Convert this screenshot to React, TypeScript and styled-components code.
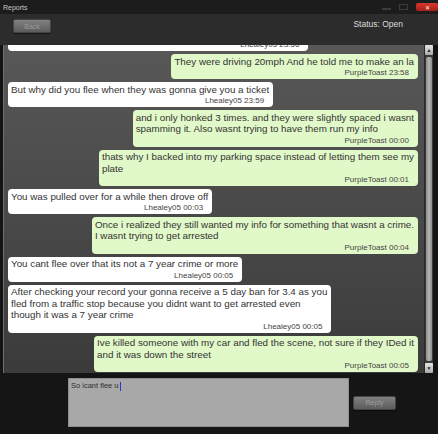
import styled, { createGlobalStyle } from 'styled-components';

const GlobalStyle = createGlobalStyle`
  html, body {
    margin: 0;
    padding: 0;
    background: #121212;
  }
  * {
    box-sizing: border-box;
  }
`;

const Window = styled.div`
  width: 438px;
  height: 434px;
  display: flex;
  flex-direction: column;
  background: #141414;
  font-family: 'Liberation Sans', Arial, sans-serif;
  overflow: hidden;
`;

const TitleBar = styled.div`
  height: 14px;
  display: flex;
  align-items: center;
  justify-content: space-between;
  padding-left: 3px;
  background: #1c1c1c;
`;

const Title = styled.span`
  font-size: 7px;
  color: #c8c8c8;
`;

const Controls = styled.div`
  display: flex;
  align-items: center;
  gap: 8px;
  height: 100%;
`;

const WinButton = styled.div<{ $kind: 'min' | 'max' | 'close' }>`
  width: ${(p) => (p.$kind === 'close' ? '22px' : '9px')};
  height: ${(p) => (p.$kind === 'close' ? '8px' : '6px')};
  display: flex;
  align-items: center;
  justify-content: center;
  font-size: 6px;
  color: #fff;
  background: ${(p) =>
    p.$kind === 'close' ? 'linear-gradient(#d8362c, #a8201a)' : 'transparent'};
  border: ${(p) => (p.$kind === 'max' ? '1px solid #3c3c3c' : 'none')};
  border-bottom: ${(p) =>
    p.$kind === 'min' ? '2px solid #3c3c3c' : p.$kind === 'max' ? '1px solid #3c3c3c' : 'none'};
  border-radius: ${(p) => (p.$kind === 'close' ? '2px' : '0')};
`;

const Header = styled.div`
  height: 31px;
  display: flex;
  justify-content: space-between;
  align-items: flex-start;
  padding: 5px 35px 0 13px;
  background: #2c2c2c;
`;

const Button = styled.div<{ $w: number }>`
  width: ${(p) => p.$w}px;
  height: 14px;
  display: flex;
  align-items: center;
  justify-content: center;
  font-size: 7px;
  color: #9c9c9c;
  background: linear-gradient(#808080, #5c5c5c);
  border: 1px solid #454545;
  border-radius: 2px;
  box-shadow: 0 1px 1px rgba(0, 0, 0, 0.5);
`;

const Status = styled.span`
  font-size: 8.5px;
  color: #dcdcdc;
`;

const ChatPanel = styled.div`
  height: 328px;
  margin: 0 5px 0 3px;
  display: flex;
  border-left: 1px solid #6e6e6e;
  background: linear-gradient(#585858, #3b3b3b);
`;

const MessageList = styled.div`
  flex: 1;
  display: flex;
  flex-direction: column;
  justify-content: flex-end;
  gap: 3px;
  padding: 0 6px 1px 4px;
  overflow: hidden;
`;

const Bubble = styled.div<{ $mine: boolean }>`
  align-self: ${(p) => (p.$mine ? 'flex-end' : 'flex-start')};
  flex-shrink: 0;
  padding: 1.5px 4px 0 3px;
  background: ${(p) => (p.$mine ? '#e1f8c8' : '#ffffff')};
  border-radius: 4px;
  color: #333;
`;

const Line = styled.div`
  font-size: 9.8px;
  line-height: 11.5px;
  white-space: nowrap;
`;

const Meta = styled.div`
  font-size: 8px;
  line-height: 12px;
  text-align: right;
  padding-right: 5px;
  color: #444;
  white-space: nowrap;
`;

const Scrollbar = styled.div`
  width: 9px;
  display: flex;
  flex-direction: column;
  background: #3a3a3a;
  border-left: 1px solid #2a2a2a;
`;

const Arrow = styled.div`
  height: 10px;
  display: flex;
  align-items: center;
  justify-content: center;
  font-size: 5px;
  color: #222;
  background: linear-gradient(#e6e6e6, #aaaaaa);
  border-radius: 1px;
`;

const Track = styled.div`
  flex: 1;
  padding: 2px 0;
  display: flex;
`;

const Thumb = styled.div`
  flex: 1;
  margin: 0 1px;
  border-radius: 2px;
  background: linear-gradient(90deg, #8c8c8c, #b4b4b4, #8c8c8c);
`;

const Footer = styled.div`
  flex: 1;
  display: flex;
  align-items: center;
  gap: 4px;
  padding: 0 0 2px 68px;
  background: #151515;
`;

const InputBox = styled.div`
  width: 281px;
  height: 49px;
  padding: 2px 2px;
  font-size: 7.5px;
  color: #2e2e2e;
  background: #a8a8a8;
  border: 1px solid #8e8e8e;
`;

const Caret = styled.span`
  display: inline-block;
  width: 1px;
  height: 9px;
  margin-left: 1px;
  vertical-align: middle;
  background: #2040c0;
`;

type Message = { mine: boolean; lines: string[]; meta: string };

const messages: Message[] = [
  {
    mine: false,
    lines: ['Yes but you drove off before the officer could even finish talking to u'],
    meta: 'Lhealey05 23:56',
  },
  { mine: true, lines: ['They were driving 20mph And he told me to make an la'], meta: 'PurpleToast 23:58' },
  { mine: false, lines: ['But why did you flee when they was gonna give you a ticket'], meta: 'Lhealey05 23:59' },
  {
    mine: true,
    lines: [
      'and i only honked 3 times. and they were slightly spaced i wasnt',
      'spamming it. Also wasnt trying to have them run my info',
    ],
    meta: 'PurpleToast 00:00',
  },
  {
    mine: true,
    lines: ['thats why I backed into my parking space instead of letting them see my', 'plate'],
    meta: 'PurpleToast 00:01',
  },
  { mine: false, lines: ['You was pulled over for a while then drove off'], meta: 'Lhealey05 00:03' },
  {
    mine: true,
    lines: [
      'Once i realized they still wanted my info for something that wasnt a crime.',
      'I wasnt trying to get arrested',
    ],
    meta: 'PurpleToast 00:04',
  },
  { mine: false, lines: ['You cant flee over that its not a 7 year crime or more'], meta: 'Lhealey05 00:05' },
  {
    mine: false,
    lines: [
      'After checking your record your gonna receive a 5 day ban for 3.4 as you',
      'fled from a traffic stop because you didnt want to get arrested even',
      'though it was a 7 year crime',
    ],
    meta: 'Lhealey05 00:05',
  },
  {
    mine: true,
    lines: [
      'Ive killed someone with my car and fled the scene, not sure if they IDed it',
      'and it was down the street',
    ],
    meta: 'PurpleToast 00:05',
  },
];

export default function App() {
  return (
    <>
      <GlobalStyle />
      <Window>
        <TitleBar>
          <Title>Reports</Title>
          <Controls>
            <WinButton $kind="min" />
            <WinButton $kind="max" />
            <WinButton $kind="close">✕</WinButton>
          </Controls>
        </TitleBar>
        <Header>
          <Button $w={38}>Back</Button>
          <Status>Status: Open</Status>
        </Header>
        <ChatPanel>
          <MessageList>
            {messages.map((m, i) => (
              <Bubble key={i} $mine={m.mine}>
                {m.lines.map((l, j) => (
                  <Line key={j}>{l}</Line>
                ))}
                <Meta>{m.meta}</Meta>
              </Bubble>
            ))}
          </MessageList>
          <Scrollbar>
            <Arrow>▲</Arrow>
            <Track>
              <Thumb />
            </Track>
            <Arrow>▼</Arrow>
          </Scrollbar>
        </ChatPanel>
        <Footer>
          <InputBox>
            So icant flee u
            <Caret />
          </InputBox>
          <Button $w={43}>Reply</Button>
        </Footer>
      </Window>
    </>
  );
}
